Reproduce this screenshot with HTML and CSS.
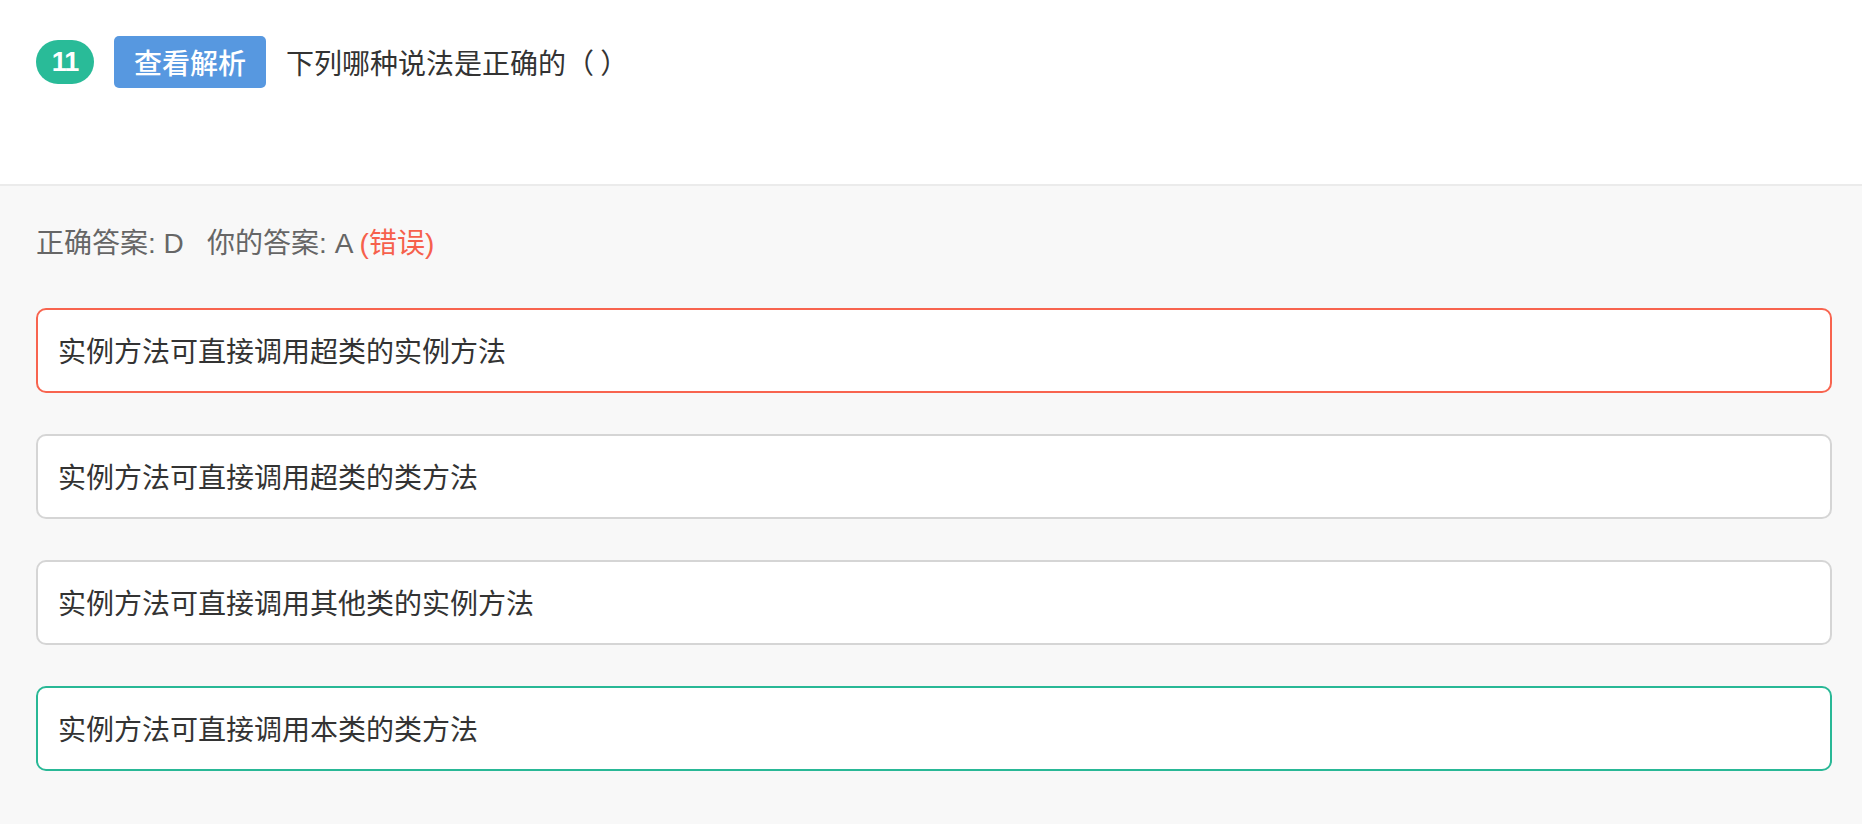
FILE: index.html
```html
<!DOCTYPE html>
<html lang="zh-CN">
<head>
<meta charset="utf-8">
<title>题目解析</title>
<link rel="stylesheet" href="styles.css">
</head>
<body>
<div class="page">
  <header class="question">
    <span class="num">11</span>
    <span class="btn">查看解析</span>
    <span class="title">下列哪种说法是正确的（ ）</span>
  </header>
  <section class="analysis">
    <div class="answer">正确答案: D&nbsp;&nbsp;&nbsp;你的答案: A <span class="wrong">(错误)</span></div>
    <div class="option option-wrong">实例方法可直接调用超类的实例方法</div>
    <div class="option">实例方法可直接调用超类的类方法</div>
    <div class="option">实例方法可直接调用其他类的实例方法</div>
    <div class="option option-right">实例方法可直接调用本类的类方法</div>
  </section>
</div>
</body>
</html>
```

FILE: styles.css
```css
* { box-sizing: border-box; }
html, body {
  margin: 0;
  padding: 0;
  background: #f8f8f8;
}
body {
  font-family: "Liberation Sans", "Noto Sans CJK SC", sans-serif;
  color: #333;
  font-size: 28px;
  text-spacing-trim: space-all;
}
.page {
  width: 1862px;
  height: 824px;
  overflow: hidden;
}
.question {
  height: 186px;
  background: #fff;
  border-bottom: 2px solid #ebebeb;
  padding: 36px 30px 0 36px;
  display: flex;
  align-items: flex-start;
}
.num {
  width: 58px;
  height: 44px;
  margin-top: 4px;
  border-radius: 22px;
  background: #29bb98;
  color: #fff;
  font-size: 27px;
  font-weight: bold;
  line-height: 44px;
  text-align: center;
  letter-spacing: -1px;
}
.btn {
  margin-left: 20px;
  width: 152px;
  height: 52px;
  border-radius: 5px;
  background: #5798e0;
  color: #fff;
  font-family: "Noto Sans CJK SC", sans-serif;
  font-weight: 500;
  font-size: 28px;
  line-height: 52px;
  text-align: center;
}
.title {
  margin-left: 20px;
  font-family: "Noto Sans CJK SC", sans-serif;
  font-size: 28px;
  line-height: 52px;
  color: #333;
  text-spacing-trim: space-all;
  font-feature-settings: "halt" 0, "chws" 0;
}
.analysis {
  padding: 38px 30px 0 36px;
}
.answer {
  font-family: "Liberation Sans", "Noto Sans CJK SC", sans-serif;
  font-size: 28px;
  line-height: 40px;
  color: #666;
  margin-bottom: 44px;
}
.wrong {
  color: #f6604c;
}
.option {
  height: 85px;
  border: 2px solid #d5d5d5;
  border-radius: 10px;
  background: #fff;
  padding: 0 20px;
  font-family: "Noto Sans CJK SC", sans-serif;
  font-size: 28px;
  line-height: 81px;
  color: #333;
  margin-bottom: 41px;
}
.option-wrong {
  border-color: #f8644f;
}
.option-right {
  border-color: #29b896;
}
```
